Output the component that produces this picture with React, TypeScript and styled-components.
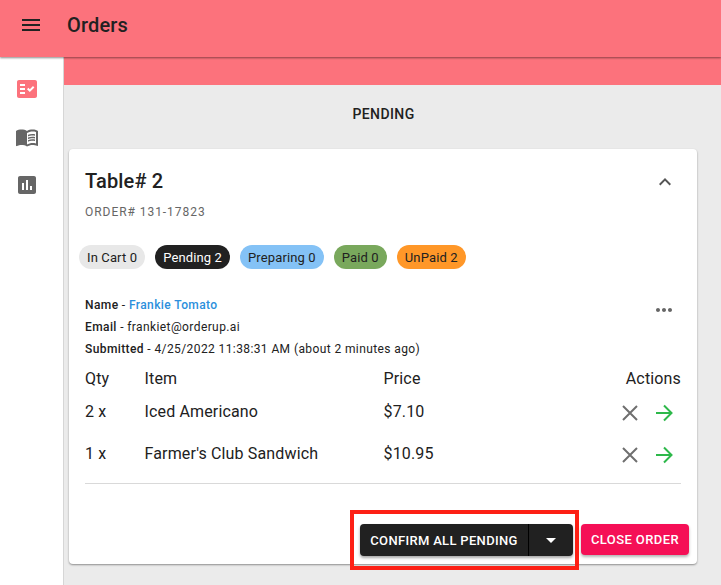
import React from "react";
import styled, { createGlobalStyle } from "styled-components";

const Global = createGlobalStyle`
  html, body { margin: 0; padding: 0; height: 100%; overflow: hidden; background: #ebebeb; }
  body { font-family: Roboto, "Liberation Sans", sans-serif; color: #212121; }
  #root { height: 100%; }
`;

const Page = styled.div`
  position: relative;
  width: 721px;
  height: 585px;
  overflow: hidden;
  display: flex;
  flex-direction: column;
`;
const AppBar = styled.header`
  height: 57px;
  flex: none;
  background: #fc727c;
  display: flex;
  align-items: center;
  padding-left: 19px;
  gap: 24px;
  box-shadow: 0 1px 2px rgba(0, 0, 0, 0.45);
  position: relative;
  z-index: 2;
`;
const Title = styled.h1`
  margin: 0;
  font-size: 20px;
  font-weight: 500;
  line-height: 24px;
  letter-spacing: 0.15px;
  position: relative;
  top: -4px;
`;
const MenuSlot = styled.div`
  margin-top: -7px;
`;
const Body = styled.div`
  flex: 1;
  display: flex;
  min-height: 0;
`;
const Sidebar = styled.nav`
  width: 53px;
  padding: 20px 10px 0 0;
  flex: none;
  background: #fff;
  border-right: 1px solid #d6d6d6;
  display: flex;
  flex-direction: column;
  align-items: center;
  gap: 24px;
  box-sizing: content-box;
`;
const Main = styled.main`
  flex: 1;
  min-width: 0;
  background: #ebebeb;
  display: flex;
  flex-direction: column;
`;
const Band = styled.div`
  height: 28px;
  background: #fc727c;
  flex: none;
`;
const Heading = styled.div`
  height: 64px;
  box-sizing: border-box;
  padding: 0 18px 6px 0;
  display: flex;
  align-items: center;
  justify-content: center;
  font-size: 14px;
  font-weight: 500;
  letter-spacing: 0.4px;
  flex: none;
`;
const Card = styled.section`
  margin: 0 24px 0 5px;
  height: 415px;
  box-sizing: border-box;
  background: #fff;
  border-radius: 4px;
  box-shadow: 0 1px 2px rgba(0, 0, 0, 0.4);
  padding: 19px 16px 0;
  display: flex;
  flex-direction: column;
`;
const CardTop = styled.div`
  display: flex;
  justify-content: space-between;
  align-items: flex-start;
`;
const TableName = styled.h2`
  margin: 0;
  font-size: 20px;
  font-weight: 500;
  line-height: 26px;
  letter-spacing: 0.15px;
`;
const OrderNo = styled.div`
  margin-top: 11px;
  font-size: 12px;
  line-height: 14px;
  letter-spacing: 0.95px;
  color: #666;
`;
const Chips = styled.div`
  display: flex;
  gap: 10px;
  margin: 26px 0 0 -6px;
`;
const Chip = styled.span<{ $bg: string; $fg?: string }>`
  height: 24px;
  padding: 0 8px;
  border-radius: 12px;
  display: flex;
  align-items: center;
  font-size: 13px;
  letter-spacing: 0.13px;
  background: ${(p) => p.$bg};
  color: ${(p) => p.$fg || "#212121"};
`;
const InfoRow = styled.div`
  display: flex;
  justify-content: space-between;
  align-items: flex-start;
  margin-top: 25px;
`;
const Info = styled.div`
  font-size: 12px;
  line-height: 22px;
  letter-spacing: 0.4px;
  color: #212121;
`;
const InfoLine = styled.div``;
const Strong = styled.b`
  font-weight: 500;
`;
const Link = styled.span`
  color: #2c8fdc;
  font-weight: 500;
`;
const Grid = styled.div`
  display: grid;
  grid-template-columns: 59.5px 239px 1fr auto;
  font-size: 16px;
  letter-spacing: 0.15px;
  margin-top: 7px;
  border-bottom: 1px solid #d9d9d9;
  padding-bottom: 9px;
`;
const Cell = styled.div<{ $head?: boolean }>`
  height: ${(p) => (p.$head ? "23px" : "42px")};
  display: flex;
  align-items: center;
`;
const ActionsHead = styled(Cell)`
  justify-content: flex-end;
`;
const Actions = styled(Cell)`
  justify-content: flex-end;
  gap: 10px;
  padding-right: 5px;
  padding-top: 3px;
  box-sizing: border-box;
`;
const Footer = styled.div`
  display: flex;
  justify-content: flex-end;
  gap: 8px;
  margin: 40px -8px 0 0;
`;
const SplitButton = styled.div`
  display: flex;
  height: 32px;
  border-radius: 4px;
  background: #212121;
  color: #fff;
  box-shadow: 0 2px 3px rgba(0, 0, 0, 0.35);
`;
const SplitLabel = styled.div`
  width: 168px;
  border-right: 1px solid #000;
  display: flex;
  align-items: center;
  justify-content: center;
  font-size: 13px;
  font-weight: 500;
  letter-spacing: 0.32px;
`;
const SplitArrow = styled.div`
  width: 44px;
  display: flex;
  align-items: center;
  justify-content: center;
`;
const CloseButton = styled.div`
  width: 108px;
  height: 31px;
  border-radius: 4px;
  background: #f50f56;
  color: #fff;
  display: flex;
  align-items: center;
  justify-content: center;
  font-size: 13px;
  font-weight: 500;
  letter-spacing: 0.4px;
  box-shadow: 0 2px 3px rgba(0, 0, 0, 0.3);
`;
const Highlight = styled.div`
  position: absolute;
  left: 350px;
  top: 510px;
  width: 229px;
  height: 60px;
  box-sizing: border-box;
  border: 4px solid #fd2015;
  pointer-events: none;
`;

const Svg = styled.svg<{ $c?: string; $s?: number }>`
  width: ${(p) => p.$s ?? 24}px;
  height: ${(p) => p.$s ?? 24}px;
  fill: ${(p) => p.$c ?? "#666"};
  display: block;
  flex: none;
`;
const Line = styled.svg<{ $c: string }>`
  width: 24px;
  height: 24px;
  fill: none;
  stroke: ${(p) => p.$c};
  stroke-width: 2;
  display: block;
  flex: none;
`;
const Chevron = styled.div`
  margin: 2px 4px 0 0;
`;
const Dots = styled.div`
  margin: 4px 5px 0 0;
`;

const X = () => (
  <Line $c="#6f6f6f" viewBox="0 0 24 24">
    <path d="M5 5l14 14M19 5L5 19" />
  </Line>
);
const Arrow = () => (
  <Line $c="#2db84a" viewBox="0 0 24 24">
    <path d="M4 12h15M12 4.5l7.5 7.5-7.5 7.5" />
  </Line>
);

const rows = [
  { q: "2 x", n: "Iced Americano", p: "$7.10" },
  { q: "1 x", n: "Farmer's Club Sandwich", p: "$10.95" },
];

export default function App() {
  return (
    <Page>
      <Global />
      <AppBar>
        <MenuSlot>
          <Svg $c="#212121" viewBox="0 0 24 24">
            <path d="M3 18h18v-2H3v2zm0-5h18v-2H3v2zm0-7v2h18V6H3z" />
          </Svg>
        </MenuSlot>
        <Title>Orders</Title>
      </AppBar>
      <Body>
        <Sidebar>
          <Svg $c="#fc727c" viewBox="0 0 24 24">
            <path d="M20 3H4c-1.1 0-2 .9-2 2v14c0 1.1.9 2 2 2h16c1.1 0 2-.9 2-2V5c0-1.1-.9-2-2-2zM10 17H5v-2h5v2zm0-4H5v-2h5v2zm0-4H5V7h5v2zm4.82 6L12 12.16l1.41-1.41 1.41 1.42L17.99 9l1.42 1.42L14.82 15z" />
          </Svg>
          <Svg $c="#666" viewBox="0 0 24 24">
            <path d="M21 5c-1.11-.35-2.33-.5-3.5-.5-1.95 0-4.05.4-5.5 1.5-1.45-1.1-3.55-1.5-5.5-1.5S2.45 4.9 1 6v14.65c0 .25.25.5.5.5.1 0 .15-.05.25-.05C3.1 20.45 5.05 20 6.5 20c1.95 0 4.05.4 5.5 1.5 1.35-.85 3.8-1.5 5.5-1.5 1.65 0 3.35.3 4.75 1.05.1.05.15.05.25.05.25 0 .5-.25.5-.5V6c-.6-.45-1.25-.75-2-1zm0 13.5c-1.1-.35-2.3-.5-3.5-.5-1.7 0-4.15.65-5.5 1.5V8c1.35-.85 3.8-1.5 5.5-1.5 1.2 0 2.4.15 3.5.5v11.5z" />
            <path d="M17.5 10.5c.88 0 1.73.09 2.5.26V9.24c-.79-.15-1.64-.24-2.5-.24-1.7 0-3.24.29-4.5.83v1.66c1.13-.64 2.7-.99 4.5-.99zM13 12.49v1.66c1.13-.64 2.7-.99 4.5-.99.88 0 1.73.09 2.5.26V11.9c-.79-.15-1.64-.24-2.5-.24-1.7 0-3.24.3-4.5.83zM17.5 14.33c-1.7 0-3.24.29-4.5.83v1.66c1.13-.64 2.7-.99 4.5-.99.88 0 1.73.09 2.5.26v-1.52c-.79-.16-1.64-.24-2.5-.24z" />
          </Svg>
          <Svg $c="#666" viewBox="0 0 24 24">
            <path d="M19 3H5c-1.1 0-2 .9-2 2v14c0 1.1.9 2 2 2h14c1.1 0 2-.9 2-2V5c0-1.1-.9-2-2-2zM9 17H7v-7h2v7zm4 0h-2V7h2v10zm4 0h-2v-4h2v4z" />
          </Svg>
        </Sidebar>
        <Main>
          <Band />
          <Heading>PENDING</Heading>
          <Card>
            <CardTop>
              <div>
                <TableName>Table# 2</TableName>
                <OrderNo>ORDER# 131-17823</OrderNo>
              </div>
              <Chevron>
                <Svg $c="#555" viewBox="0 0 24 24">
                  <path d="M12 8l-6 6 1.41 1.41L12 10.83l4.59 4.58L18 14z" />
                </Svg>
              </Chevron>
            </CardTop>
            <Chips>
              <Chip $bg="#e8e8e8">In Cart 0</Chip>
              <Chip $bg="#212121" $fg="#fff">Pending 2</Chip>
              <Chip $bg="#84c2f6">Preparing 0</Chip>
              <Chip $bg="#79a85c">Paid 0</Chip>
              <Chip $bg="#ff9728">UnPaid 2</Chip>
            </Chips>
            <InfoRow>
              <Info>
                <InfoLine><Strong>Name</Strong> - <Link>Frankie Tomato</Link></InfoLine>
                <InfoLine><Strong>Email</Strong> - frankiet@orderup.ai</InfoLine>
                <InfoLine><Strong>Submitted</Strong> - 4/25/2022 11:38:31 AM (about 2 minutes ago)</InfoLine>
              </Info>
              <Dots>
                <Svg $c="#666" viewBox="0 0 24 24">
                  <path d="M6 10c-1.1 0-2 .9-2 2s.9 2 2 2 2-.9 2-2-.9-2-2-2zm12 0c-1.1 0-2 .9-2 2s.9 2 2 2 2-.9 2-2-.9-2-2-2zm-6 0c-1.1 0-2 .9-2 2s.9 2 2 2 2-.9 2-2-.9-2-2-2z" />
                </Svg>
              </Dots>
            </InfoRow>
            <Grid>
              <Cell $head>Qty</Cell>
              <Cell $head>Item</Cell>
              <Cell $head>Price</Cell>
              <ActionsHead $head>Actions</ActionsHead>
              {rows.map((r) => (
                <React.Fragment key={r.n}>
                  <Cell>{r.q}</Cell>
                  <Cell>{r.n}</Cell>
                  <Cell>{r.p}</Cell>
                  <Actions><X /><Arrow /></Actions>
                </React.Fragment>
              ))}
            </Grid>
            <Footer>
              <SplitButton>
                <SplitLabel>CONFIRM ALL PENDING</SplitLabel>
                <SplitArrow>
                  <Svg $c="#fff" viewBox="0 0 24 24">
                    <path d="M7 10l5 5 5-5z" />
                  </Svg>
                </SplitArrow>
              </SplitButton>
              <CloseButton>CLOSE ORDER</CloseButton>
            </Footer>
          </Card>
        </Main>
      </Body>
      <Highlight />
    </Page>
  );
}
